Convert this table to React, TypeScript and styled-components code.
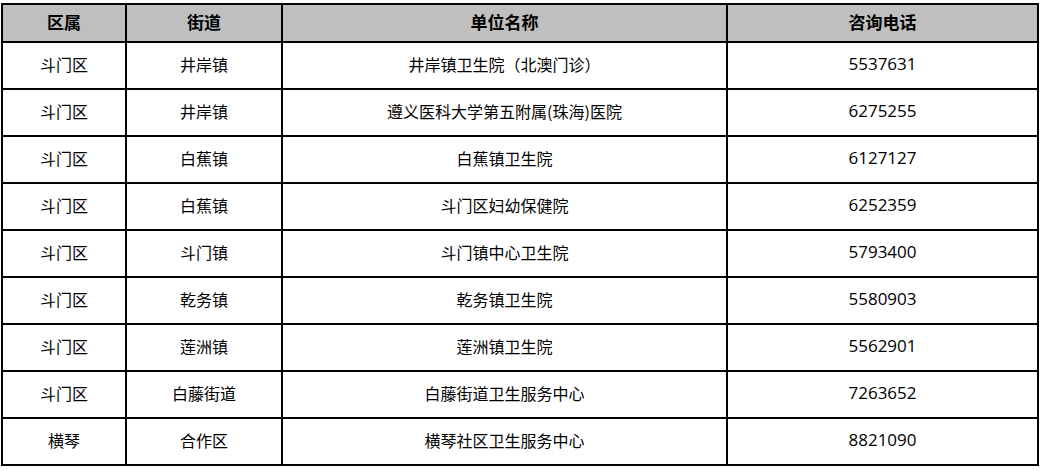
import { FC } from 'react';
import styled, { createGlobalStyle } from 'styled-components';

const GlobalStyle = createGlobalStyle`
	body {
		margin: 0;
		background: #fff;
		font-family: "Noto Sans CJK SC", "Noto Sans", sans-serif;
	}
`;

const Page = styled.div({
	padding: '3px 0 0 1px',
});

const Table = styled.table({
	borderCollapse: 'collapse',
	tableLayout: 'fixed',
	width: '1036px',
	color: '#000',
});

const HeadCell = styled.th({
	height: '34px',
	padding: '0 0 2px',
	border: '2px solid #000',
	background: '#bfbfbf',
	fontSize: '17px',
	lineHeight: '20px',
	fontWeight: 700,
	textAlign: 'center',
});

const Cell = styled.td({
	height: '42px',
	padding: '0 0 3px',
	border: '2px solid #000',
	fontSize: '16px',
	lineHeight: '20px',
	textAlign: 'center',
});

const NumCell = styled(Cell)({
	fontFamily: '"Open Sans", "Noto Sans", sans-serif',
	fontSize: '17px',
});

interface Row {
	district: string;
	street: string;
	unit: string;
	phone: string;
}

const rows: Row[] = [
	{ district: '斗门区', street: '井岸镇', unit: '井岸镇卫生院（北澳门诊）', phone: '5537631' },
	{ district: '斗门区', street: '井岸镇', unit: '遵义医科大学第五附属(珠海)医院', phone: '6275255' },
	{ district: '斗门区', street: '白蕉镇', unit: '白蕉镇卫生院', phone: '6127127' },
	{ district: '斗门区', street: '白蕉镇', unit: '斗门区妇幼保健院', phone: '6252359' },
	{ district: '斗门区', street: '斗门镇', unit: '斗门镇中心卫生院', phone: '5793400' },
	{ district: '斗门区', street: '乾务镇', unit: '乾务镇卫生院', phone: '5580903' },
	{ district: '斗门区', street: '莲洲镇', unit: '莲洲镇卫生院', phone: '5562901' },
	{ district: '斗门区', street: '白藤街道', unit: '白藤街道卫生服务中心', phone: '7263652' },
	{ district: '横琴', street: '合作区', unit: '横琴社区卫生服务中心', phone: '8821090' },
];

const App: FC = () => {
	return (
		<Page>
			<GlobalStyle />
			<Table>
				<colgroup>
					<col style={{ width: '124px' }} />
					<col style={{ width: '156px' }} />
					<col style={{ width: '445px' }} />
					<col style={{ width: '311px' }} />
				</colgroup>
				<thead>
					<tr>
						<HeadCell>区属</HeadCell>
						<HeadCell>街道</HeadCell>
						<HeadCell>单位名称</HeadCell>
						<HeadCell>咨询电话</HeadCell>
					</tr>
				</thead>
				<tbody>
					{rows.map((r, i) => (
						<tr key={i}>
							<Cell>{r.district}</Cell>
							<Cell>{r.street}</Cell>
							<Cell>{r.unit}</Cell>
							<NumCell>{r.phone}</NumCell>
						</tr>
					))}
				</tbody>
			</Table>
		</Page>
	);
};

export default App;
